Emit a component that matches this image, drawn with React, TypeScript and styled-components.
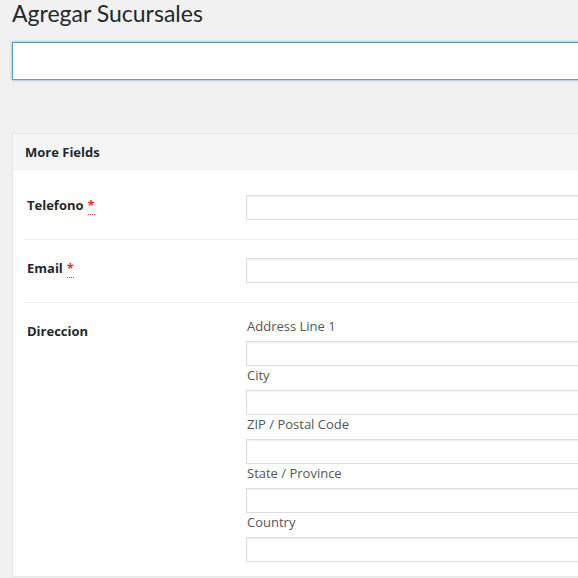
import React from "react";
import styled, { createGlobalStyle } from "styled-components";

const Global = createGlobalStyle`
  html, body { margin: 0; padding: 0; background: #f1f1f1; overflow: hidden; }
  body { font-family: "Open Sans", "Liberation Sans", sans-serif; color: #444; }
`;

const Page = styled.div`
  width: 660px;
  padding: 0 0 0 12px;
`;

const Title = styled.h1`
  margin: 0;
  padding: 0;
  font-family: "Lato", "Open Sans", sans-serif;
  font-weight: 400;
  font-size: 23px;
  line-height: 26px;
  color: #23282d;
`;

const TitleInput = styled.input`
  display: block;
  box-sizing: border-box;
  margin: 16px 0 0;
  width: 100%;
  height: 38px;
  border: 1px solid #5b9dd9;
  box-shadow: 0 0 2px rgba(30, 140, 190, 0.8);
  background: #fff;
  outline: none;
`;

const Panel = styled.section`
  margin-top: 53px;
  background: #fff;
  border: 1px solid #e5e5e5;
`;

const PanelHeader = styled.h2`
  margin: 0;
  height: 36px;
  box-sizing: border-box;
  padding: 0 12px;
  display: flex;
  align-items: center;
  background: #f5f5f5;
  border-bottom: 1px solid #eeeeee;
  font-size: 13px;
  font-weight: 700;
  color: #23282d;
`;

const PanelBody = styled.div`
  padding: 7px 11px 0;
`;

const Row = styled.div<{ $last?: boolean }>`
  display: grid;
  grid-template-columns: 222px 1fr;
  padding: 18px 0 ${(p) => (p.$last ? "14px" : "19px")};
  border-bottom: ${(p) => (p.$last ? "none" : "1px solid #eeeeee")};
`;

const Label = styled.div`
  padding: 0 0 0 3px;
  font-size: 13px;
  font-weight: 700;
  line-height: 20px;
  color: #23282d;
`;

const Req = styled.abbr`
  color: #dc3232;
  text-decoration: none;
  border-bottom: 1px dotted #dc3232;
  margin-left: 4px;
  font-weight: 700;
`;

const Field = styled.input`
  display: block;
  box-sizing: border-box;
  width: 100%;
  height: 25px;
  margin: 0;
  border: 1px solid #dddddd;
  box-shadow: inset 0 1px 2px rgba(0, 0, 0, 0.07);
  background: #fff;
  outline: none;
`;

const SubFields = styled.div`
  margin-top: -4px;
`;

const SubLabel = styled.div`
  font-size: 13px;
  line-height: 18px;
  margin: 0 0 6px 1px;
  color: #555;
`;

const subFields = ["Address Line 1", "City", "ZIP / Postal Code", "State / Province", "Country"];

export default function App() {
  return (
    <Page>
      <Global />
      <Title>Agregar Sucursales</Title>
      <TitleInput />
      <Panel>
        <PanelHeader>More Fields</PanelHeader>
        <PanelBody>
          <Row>
            <Label>
              Telefono<Req title="required">*</Req>
            </Label>
            <Field />
          </Row>
          <Row>
            <Label>
              Email<Req title="required">*</Req>
            </Label>
            <Field />
          </Row>
          <Row $last>
            <Label>Direccion</Label>
            <SubFields>
              {subFields.map((s) => (
                <div key={s}>
                  <SubLabel>{s}</SubLabel>
                  <Field />
                </div>
              ))}
            </SubFields>
          </Row>
        </PanelBody>
      </Panel>
    </Page>
  );
}
